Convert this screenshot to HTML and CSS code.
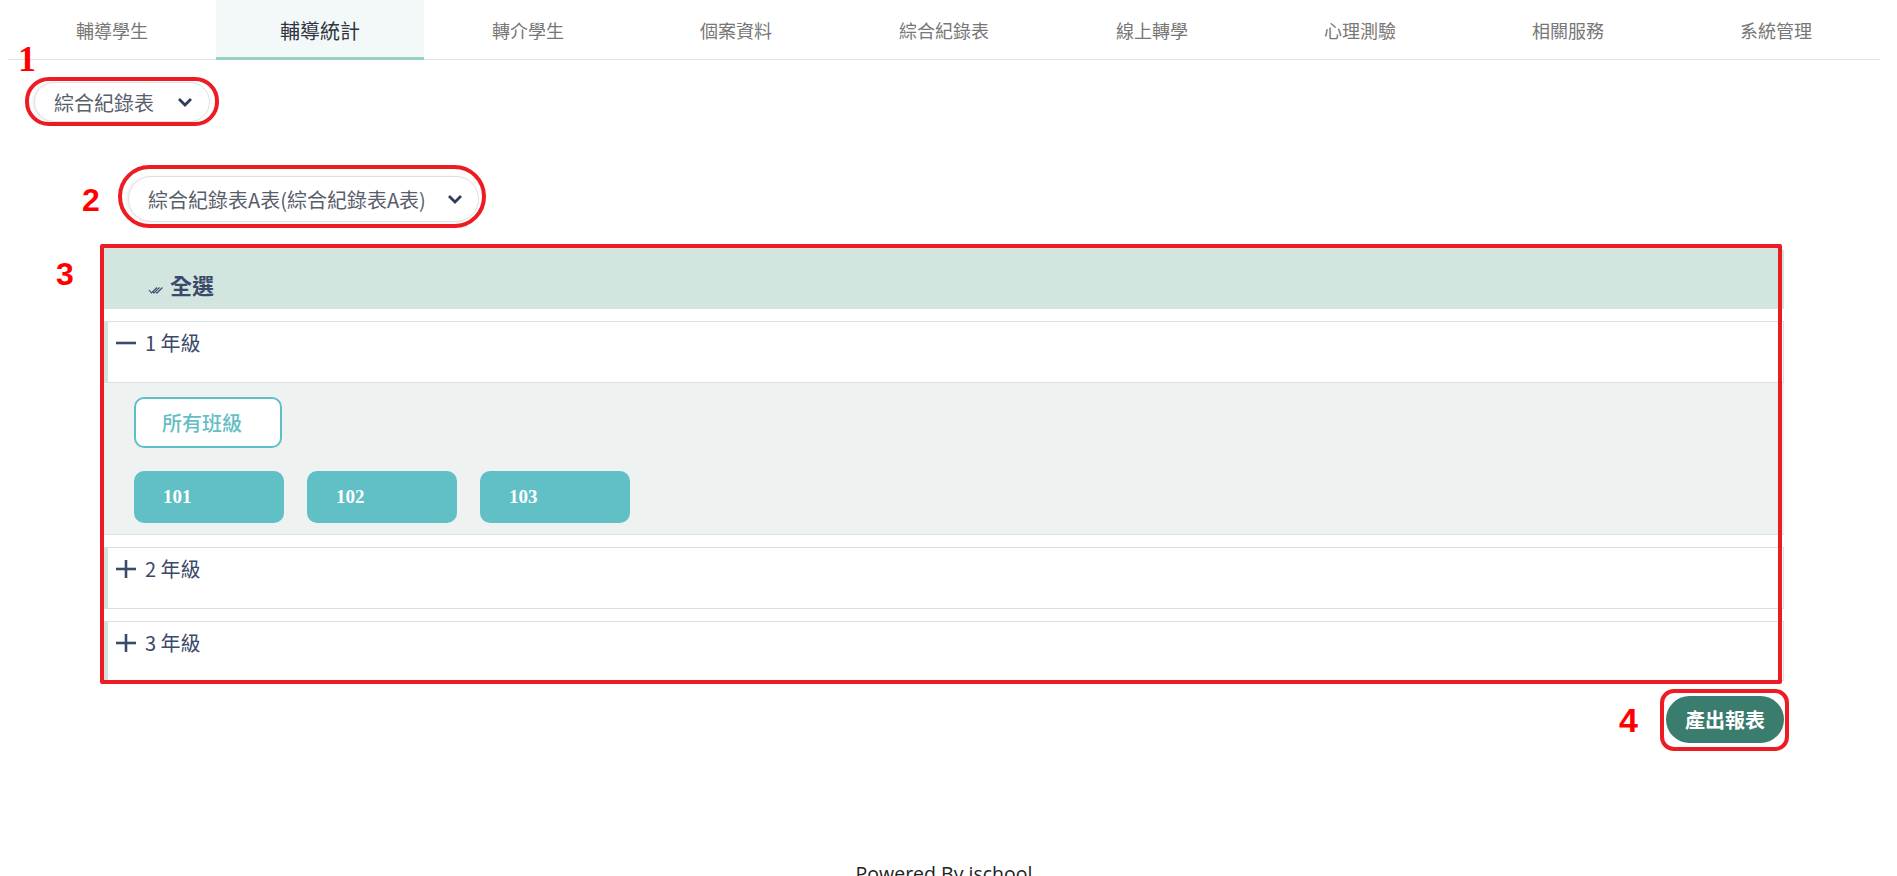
FILE: index.html
```html
<!DOCTYPE html>
<html lang="zh-Hant">
<head>
    <meta charset="UTF-8">
    <meta name="viewport" content="width=device-width, initial-scale=1.0">
    <title>輔導統計</title>
    <link rel="stylesheet" href="styles.css">
</head>
<body>
    <nav class="tabs">
        <div class="tab">輔導學生</div>
        <div class="tab active">輔導統計</div>
        <div class="tab">轉介學生</div>
        <div class="tab">個案資料</div>
        <div class="tab">綜合紀錄表</div>
        <div class="tab">線上轉學</div>
        <div class="tab">心理測驗</div>
        <div class="tab">相關服務</div>
        <div class="tab">系統管理</div>
    </nav>

    <!-- 1: report type -->
    <div class="mark mark-report">
        <span class="step step-serif step-1">1</span>
        <button class="select select-report">
            <span>綜合紀錄表</span>
            <svg class="chevron" viewBox="0 0 16 10"><polyline points="2,2 8,8 14,2"/></svg>
        </button>
    </div>

    <!-- 2: form -->
    <div class="mark mark-form">
        <span class="step step-2">2</span>
        <button class="select select-form">
            <span>綜合紀錄表A表(綜合紀錄表A表)</span>
            <svg class="chevron" viewBox="0 0 16 10"><polyline points="2,2 8,8 14,2"/></svg>
        </button>
    </div>

    <!-- 3: classes -->
    <div class="grade-panel">
        <span class="step step-3">3</span>
        <div class="select-all">
            <svg class="check-all" viewBox="0 0 16 8">
                <polyline points="1,4 3.5,7 9,1.5"/>
                <polyline points="5,6 6,7 11.5,1.5"/>
                <polyline points="8,6.5 9,7 14.5,1.5"/>
            </svg>
            <span>全選</span>
        </div>

        <div class="grade open">
            <div class="grade-head">
                <svg class="toggle" viewBox="0 0 20 20"><line x1="0" y1="10" x2="20" y2="10"/></svg>
                <span>1 年級</span>
            </div>
            <div class="grade-body">
                <button class="all-classes">所有班級</button>
                <div class="class-list">
                    <button class="class-btn">101</button>
                    <button class="class-btn">102</button>
                    <button class="class-btn">103</button>
                </div>
            </div>
        </div>

        <div class="grade">
            <div class="grade-head">
                <svg class="toggle" viewBox="0 0 20 20"><line x1="0" y1="10" x2="20" y2="10"/><line x1="10" y1="1" x2="10" y2="19"/></svg>
                <span>2 年級</span>
            </div>
        </div>

        <div class="grade">
            <div class="grade-head">
                <svg class="toggle" viewBox="0 0 20 20"><line x1="0" y1="10" x2="20" y2="10"/><line x1="10" y1="1" x2="10" y2="19"/></svg>
                <span>3 年級</span>
            </div>
        </div>
    </div>

    <!-- 4: export -->
    <div class="actions">
        <div class="mark mark-export">
            <span class="step step-4">4</span>
            <button class="export-btn">產出報表</button>
        </div>
    </div>

    <footer class="footer">Powered By ischool</footer>
</body>
</html>
```

FILE: styles.css
```css
html {
    overflow: hidden;
}

body {
    margin: 0 17px 0 8px;
    background-color: white;
    font-family: "Noto Sans CJK TC", "Noto Sans", sans-serif;
    color: #333;
}

button {
    font-family: inherit;
    cursor: pointer;
}

/* top tabs */
.tabs {
    display: flex;
    align-items: flex-start;
    height: 59px;
    border-bottom: 1px solid #e1e1e1;
}

.tab {
    flex: 1;
    height: 59px;
    display: flex;
    align-items: center;
    justify-content: center;
    font-size: 18px;
    color: #777;
}

.tab.active {
    height: 60px;
    margin-bottom: -1px;
    background-color: #f3f9f9;
    box-shadow: inset 0 -3px 0 #96d1c8;
    font-size: 20px;
    color: #2f3340;
}

/* red annotation marks */
.mark {
    position: relative;
    display: flex;
    width: max-content;
    border: 4px solid #ed1c24;
}

.step {
    position: absolute;
    font-family: "Liberation Sans", Arial, sans-serif;
    font-weight: bold;
    font-size: 32px;
    line-height: 1;
    color: #ff0000;
}

.step-serif {
    font-family: "Liberation Serif", serif;
    font-size: 36px;
}

.step-1 { left: -11px; top: -40px; }
.step-2 { left: -40px; top: 15px; }
.step-3 { left: -48px; top: 10px; }
.step-4 { left: -45px; top: 10px; font-size: 34px; }

.mark-report {
    margin: 17px 0 0 17px;
    padding: 1px 5px 0;
    border-radius: 24px;
}

.mark-form {
    margin: 39px 0 0 110px;
    padding: 7px 3px 2px 6px;
    border-radius: 32px;
}

/* dropdowns */
.select {
    display: flex;
    align-items: center;
    background-color: white;
    border: 1px solid #e0e0e0;
    border-radius: 24px;
    box-shadow: -2px 0 3px rgba(0, 0, 0, 0.06);
    font-size: 20px;
    color: #595e6b;
}

.select-report {
    height: 40px;
    padding: 0 16px 0 19px;
    gap: 23px;
}

.select-form {
    height: 46px;
    padding: 0 15px 0 19px;
    gap: 21px;
}

.chevron {
    width: 16px;
    height: 10px;
    fill: none;
    stroke: #2f3d5c;
    stroke-width: 2.8;
}

/* grade panel */
.grade-panel {
    position: relative;
    width: 1680px;
    margin: 20px 0 0 96px;
}

.grade-panel::after {
    content: '';
    position: absolute;
    left: -4px;
    top: -4px;
    right: 2px;
    bottom: -3px;
    border: 4px solid #ed1c24;
    border-radius: 2px;
    pointer-events: none;
}

.select-all {
    height: 61px;
    box-sizing: border-box;
    padding: 21px 0 0 44px;
    display: flex;
    align-items: baseline;
    gap: 6px;
    background-color: #d2e6df;
    border-radius: 0 4px 0 0;
    font-size: 22px;
    line-height: 30px;
    font-weight: bold;
    color: #3b4a6b;
}

.check-all {
    width: 16px;
    height: 8px;
    fill: none;
    stroke: #3b4a6b;
    stroke-width: 1.1;
}

.grade {
    margin-top: 12px;
}

.grade:first-of-type {
    margin-top: 11px;
}

.grade-head {
    height: 62px;
    box-sizing: border-box;
    padding: 9px 0 0 8px;
    display: flex;
    align-items: flex-start;
    gap: 9px;
    background-color: white;
    border: 1px solid #d9e2df;
    border-left: 4px solid #d2e3dd;
    font-size: 20px;
    line-height: 24px;
    color: #3b4a6b;
}

.grade:last-child .grade-head {
    height: 60px;
}

.toggle {
    width: 20px;
    height: 20px;
    margin-top: 2px;
    stroke: #3b4a6b;
    stroke-width: 2.6;
}

.grade-body {
    padding: 14px 0 11px 30px;
    background-color: #eef3f2;
    border-bottom: 1px solid #dde3e1;
}

.all-classes {
    width: 148px;
    height: 51px;
    padding: 0 0 0 26px;
    text-align: left;
    background-color: white;
    border: 2px solid #5dbfc7;
    border-radius: 10px;
    font-size: 20px;
    font-weight: 500;
    color: #66bec4;
}

.class-list {
    display: flex;
    gap: 23px;
    margin-top: 23px;
}

.class-btn {
    width: 150px;
    height: 52px;
    padding: 0 0 0 29px;
    text-align: left;
    background-color: #60c0c6;
    border: none;
    border-radius: 10px;
    font-family: "Liberation Serif", serif;
    font-size: 19px;
    font-weight: bold;
    color: white;
}

/* export */
.actions {
    width: 1680px;
    margin-left: 96px;
    display: flex;
    justify-content: flex-end;
}

.mark-export {
    margin: 8px -5px 0 0;
    padding: 3px 1px 4px 2px;
    border-radius: 14px;
}

.export-btn {
    height: 47px;
    padding: 0 19px;
    background-color: #3a7c6e;
    border: none;
    border-radius: 24px;
    font-size: 20px;
    font-weight: bold;
    color: white;
}

.footer {
    margin-top: 110px;
    text-align: center;
    font-family: "Open Sans", sans-serif;
    font-size: 19.5px;
    line-height: 26px;
    color: #222;
}
```
